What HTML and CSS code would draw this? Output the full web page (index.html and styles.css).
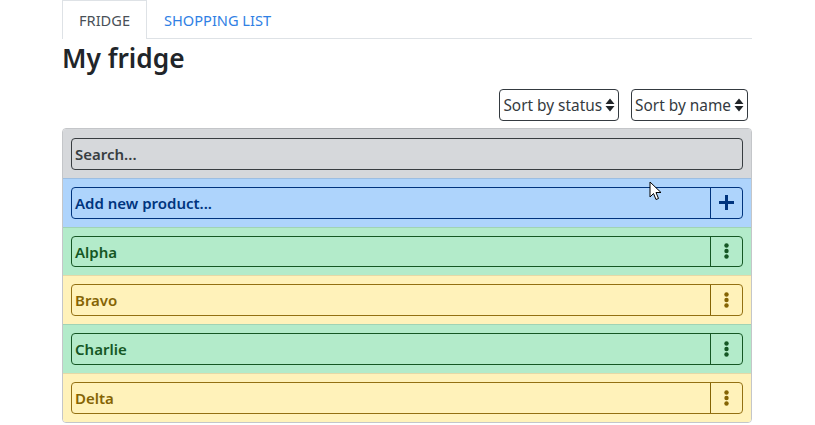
FILE: index.html
```html
<!DOCTYPE html>
<html lang="en">
<head>
<meta charset="utf-8">
<title>My fridge</title>
<link rel="stylesheet" href="styles.css">
</head>
<body>
<div class="container">
  <nav class="tabs">
    <a class="tab active">FRIDGE</a>
    <a class="tab">SHOPPING LIST</a>
  </nav>
  <h2 class="title">My fridge</h2>
  <div class="sorts">
    <div class="select">Sort by status<svg class="caret" viewBox="0 0 10 14" width="10" height="14"><path d="M5 0.5L9.5 6H0.5Z M5 13.5L9.5 8H0.5Z" fill="#212529"/></svg></div>
    <div class="select">Sort by name<svg class="caret" viewBox="0 0 10 14" width="10" height="14"><path d="M5 0.5L9.5 6H0.5Z M5 13.5L9.5 8H0.5Z" fill="#212529"/></svg></div>
  </div>
  <ul class="list">
    <li class="row row-secondary">
      <div class="field"><span class="text">Search...</span></div>
    </li>
    <li class="row row-primary">
      <div class="field"><span class="text">Add new product...</span><span class="btn"><svg viewBox="0 0 15 15" width="15" height="15"><path d="M7.5 0V15M0 7.5H15" stroke="currentColor" stroke-width="3"/></svg></span></div>
    </li>
    <li class="row row-success">
      <div class="field"><span class="text">Alpha</span><span class="btn"><svg viewBox="0 0 5 16" width="5" height="16"><circle cx="2.5" cy="2.5" r="2.2" fill="currentColor"/><circle cx="2.5" cy="8" r="2.2" fill="currentColor"/><circle cx="2.5" cy="13.5" r="2.2" fill="currentColor"/></svg></span></div>
    </li>
    <li class="row row-warning">
      <div class="field"><span class="text">Bravo</span><span class="btn"><svg viewBox="0 0 5 16" width="5" height="16"><circle cx="2.5" cy="2.5" r="2.2" fill="currentColor"/><circle cx="2.5" cy="8" r="2.2" fill="currentColor"/><circle cx="2.5" cy="13.5" r="2.2" fill="currentColor"/></svg></span></div>
    </li>
    <li class="row row-success">
      <div class="field"><span class="text">Charlie</span><span class="btn"><svg viewBox="0 0 5 16" width="5" height="16"><circle cx="2.5" cy="2.5" r="2.2" fill="currentColor"/><circle cx="2.5" cy="8" r="2.2" fill="currentColor"/><circle cx="2.5" cy="13.5" r="2.2" fill="currentColor"/></svg></span></div>
    </li>
    <li class="row row-warning">
      <div class="field"><span class="text">Delta</span><span class="btn"><svg viewBox="0 0 5 16" width="5" height="16"><circle cx="2.5" cy="2.5" r="2.2" fill="currentColor"/><circle cx="2.5" cy="8" r="2.2" fill="currentColor"/><circle cx="2.5" cy="13.5" r="2.2" fill="currentColor"/></svg></span></div>
    </li>
  </ul>
</div>
<svg class="cursor" viewBox="0 0 13 20" width="13" height="20"><path d="M1 1V16L4.5 12.5L7 18.5L9.5 17.5L7 11.5H12Z" fill="#fff" stroke="#000" stroke-width="1" stroke-linejoin="round"/></svg>
</body>
</html>
```

FILE: styles.css
```css
* { box-sizing: border-box; }
html, body { margin: 0; padding: 0; background: #fff; }
body {
  font-family: "Noto Sans", "Open Sans", sans-serif;
  font-size: 15px;
  color: #212529;
}
.container {
  width: 690px;
  margin-left: 62px;
}
.tabs {
  display: flex;
  border-bottom: 1px solid #dee2e6;
  height: 39px;
}
.tab {
  display: block;
  padding: 0 16px;
  line-height: 38px;
  font-size: 14.6px;
  color: #2f80e4;
  border: 1px solid transparent;
  border-bottom: 0;
}
.tab.active {
  color: #495057;
  border-color: #dee2e6;
  background: #fff;
  height: 39px;
}
.title {
  margin: 1px 0 0;
  font-size: 26.3px;
  font-weight: 600;
  line-height: 36px;
  color: #212529;
}
.sorts {
  display: flex;
  justify-content: flex-end;
  gap: 12px;
  padding-right: 4px;
  margin-top: 13px;
}
.select {
  display: flex;
  align-items: center;
  gap: 3px;
  height: 32px;
  padding: 0 3px 0 3px;
  border: 1px solid #343a40;
  border-radius: 4px;
  font-size: 15.4px;
  color: #343a40;
}
.caret { display: block; }
.list {
  list-style: none;
  margin: 7px 0 0;
  padding: 0;
  border: 1px solid #c4c6c9;
  border-radius: 4px;
  overflow: hidden;
}
.row {
  padding: 8px;
  border-top: 1px solid rgba(0,0,0,0.1);
}
.row:first-child { border-top: 0; padding-top: 9px; }
.field {
  display: flex;
  height: 31.75px;
  border: 1px solid currentColor;
  border-radius: 4px;
  font-weight: 600;
}
.text {
  flex: 1;
  padding: 0 3px;
  line-height: 30px;
}
.btn {
  width: 32px;
  border-left: 1px solid currentColor;
  display: flex;
  align-items: center;
  justify-content: center;
}
.row-secondary { background: #d6d8db; color: #383d41; }
.row-primary { background: #aed4fc; color: #00347e; }
.row-success { background: #b3ebca; color: #155724; }
.row-warning { background: #fff2ba; color: #856404; }
.row-warning .field { border-color: #937012; }
.cursor {
  position: absolute;
  left: 649px;
  top: 181px;
}
```
